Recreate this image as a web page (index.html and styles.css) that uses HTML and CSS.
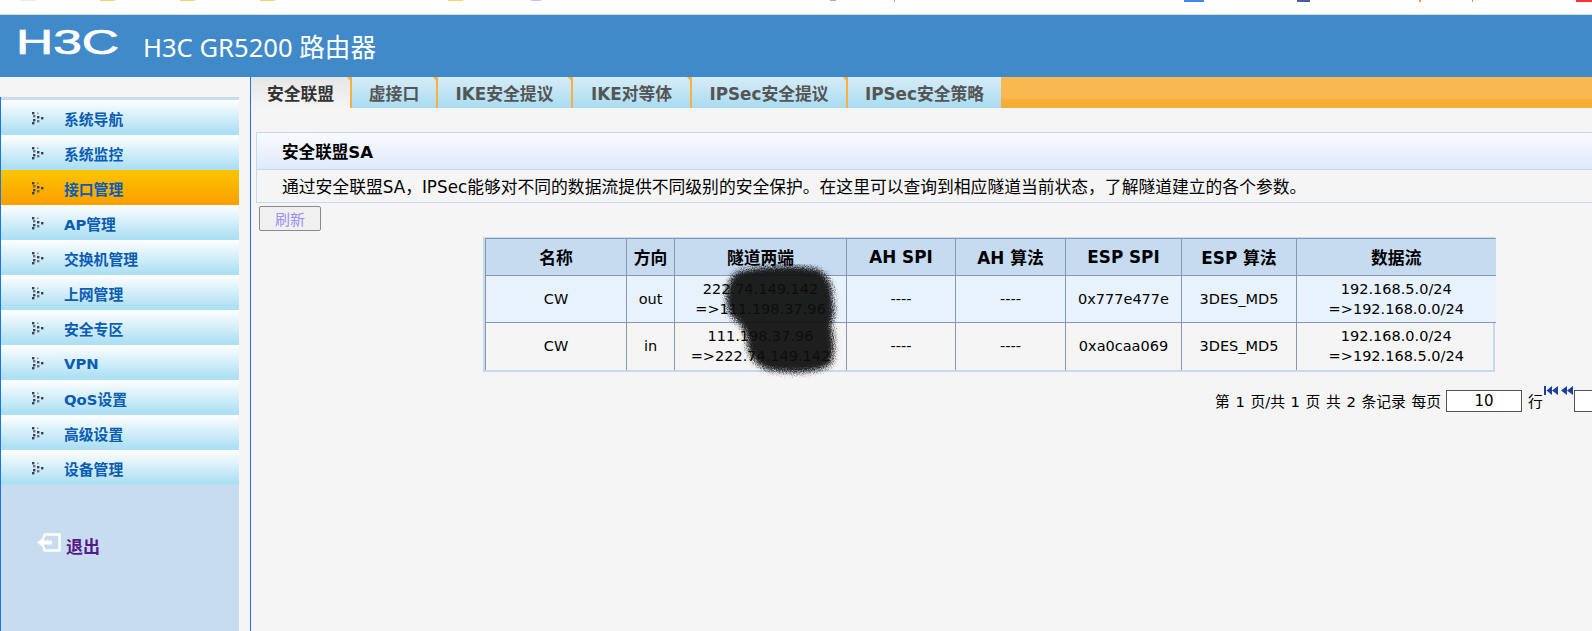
FILE: index.html
```html
<!DOCTYPE html>
<html lang="zh-CN">
<head>
<meta charset="utf-8">
<title>H3C GR5200 路由器</title>
<link rel="stylesheet" href="styles.css">
</head>
<body>
<svg class="defs" width="0" height="0" aria-hidden="true">
  <symbol id="dots" viewBox="0 0 12 13">
    <rect x="0" y="0" width="2.4" height="2.4"/><rect x="5" y="0.5" width="1.6" height="1.6" opacity=".5"/>
    <rect x="1" y="3" width="2.4" height="2.4" opacity=".7"/><rect x="5" y="4" width="2.4" height="2.4"/>
    <rect x="9" y="5" width="2.4" height="2.4"/>
    <rect x="1" y="7" width="2.4" height="2.4"/><rect x="5" y="8" width="2.4" height="2.4" opacity=".7"/>
    <rect x="0" y="10" width="2.4" height="2.4"/>
  </symbol>
</svg>
<div class="strip">
  <i class="bit b1"></i><i class="bit b2"></i><i class="bit b3"></i><i class="bit b4"></i><i class="bit b5"></i><i class="bit b6"></i><i class="bit b7"></i><i class="bit b8"></i><i class="bit b9"></i><i class="bit b10"></i><i class="bit b11"></i><i class="bit b12"></i><i class="bit b13"></i>
</div>
<header class="banner">
  <svg class="logo" width="112" height="34" viewBox="0 0 112 34"><text class="logo-text" x="1" y="29" textLength="103" lengthAdjust="spacingAndGlyphs">H3C</text></svg>
  <h1 class="title">H3C GR5200 路由器</h1>
</header>
<div class="body-row">
  <aside class="side">
    <nav class="menu">
      <a class="item"><svg class="dots"><use href="#dots"/></svg>系统导航</a>
      <a class="item"><svg class="dots"><use href="#dots"/></svg>系统监控</a>
      <a class="item active"><svg class="dots"><use href="#dots"/></svg>接口管理</a>
      <a class="item"><svg class="dots"><use href="#dots"/></svg>AP管理</a>
      <a class="item"><svg class="dots"><use href="#dots"/></svg>交换机管理</a>
      <a class="item"><svg class="dots"><use href="#dots"/></svg>上网管理</a>
      <a class="item"><svg class="dots"><use href="#dots"/></svg>安全专区</a>
      <a class="item"><svg class="dots"><use href="#dots"/></svg>VPN</a>
      <a class="item"><svg class="dots"><use href="#dots"/></svg>QoS设置</a>
      <a class="item"><svg class="dots"><use href="#dots"/></svg>高级设置</a>
      <a class="item"><svg class="dots"><use href="#dots"/></svg>设备管理</a>
      <a class="logout">
        <svg class="logout-icon" width="24" height="19" viewBox="0 0 24 19"><path d="M7 1.5H22.5V17.5H7M7 1.5V5M7 14V17.5" fill="none" stroke="#fff" stroke-width="2.4"/><path d="M0 9.5L7 4V7.6H15V11.4H7V15Z" fill="#fff"/></svg>
        <span class="logout-label">退出</span>
      </a>
    </nav>
  </aside>
  <main class="main">
    <div class="inner">
      <div class="tabs">
        <div class="tabrow">
          <div class="tab on">安全联盟</div>
          <div class="tab">虚接口</div>
          <div class="tab">IKE安全提议</div>
          <div class="tab">IKE对等体</div>
          <div class="tab">IPSec安全提议</div>
          <div class="tab last">IPSec安全策略</div>
        </div>
      </div>
      <section class="panel">
        <h2 class="panel-head">安全联盟SA</h2>
        <p class="panel-desc">通过安全联盟SA，IPSec能够对不同的数据流提供不同级别的安全保护。在这里可以查询到相应隧道当前状态，了解隧道建立的各个参数。</p>
      </section>
      <button class="refresh" type="button">刷新</button>
      <div class="table-wrap">
        <table class="sa">
          <colgroup>
            <col class="c1"><col class="c2"><col class="c3"><col class="c4"><col class="c5"><col class="c6"><col class="c7"><col class="c8">
          </colgroup>
          <thead>
            <tr><th>名称</th><th>方向</th><th>隧道两端</th><th>AH SPI</th><th>AH 算法</th><th>ESP SPI</th><th>ESP 算法</th><th>数据流</th></tr>
          </thead>
          <tbody>
            <tr class="odd"><td>CW</td><td>out</td><td>222.74.149.142<br>=&gt;111.198.37.96</td><td>----</td><td>----</td><td>0x777e477e</td><td>3DES_MD5</td><td>192.168.5.0/24<br>=&gt;192.168.0.0/24</td></tr>
            <tr><td>CW</td><td>in</td><td>111.198.37.96<br>=&gt;222.74.149.142</td><td>----</td><td>----</td><td>0xa0caa069</td><td>3DES_MD5</td><td>192.168.0.0/24<br>=&gt;192.168.5.0/24</td></tr>
          </tbody>
        </table>
        <svg class="scribble" width="130" height="120" viewBox="0 0 130 120" aria-hidden="true">
          <defs><filter id="soft" x="-20%" y="-20%" width="140%" height="140%">
            <feGaussianBlur in="SourceGraphic" stdDeviation="2.5" result="b"/>
            <feTurbulence type="fractalNoise" baseFrequency="0.9" numOctaves="2" seed="4" result="n"/>
            <feDisplacementMap in="b" in2="n" scale="9" xChannelSelector="R" yChannelSelector="G"/>
          </filter></defs>
          <path d="M18 8C40 1 84 0 100 6C111 12 114 24 114 36C116 46 115 54 112 62C116 74 116 90 112 100C100 110 70 110 50 106C36 102 30 92 28 80C28 70 24 62 12 52C4 40 6 16 18 8Z" fill="#111" fill-opacity=".93" filter="url(#soft)"/>
        </svg>
      </div>
      <div class="pager">
        <span>第 1 页/共 1 页 共 2 条记录 每页</span>
        <input class="size" type="text" value="10" aria-label="每页行数">
        <span>行</span>
        <svg class="nav-icons" width="30" height="10" viewBox="0 0 30 10" aria-hidden="true">
          <path d="M0 0H2V9H0ZM2.5 4.5L8 0V9ZM8 4.5L14 0V9Z" fill="#1a3f9e"/>
          <path d="M17 4.5L23 0V9ZM23 4.5L29 0V9Z" fill="#1a3f9e"/>
        </svg>
        <input class="jump" type="text" aria-label="跳转页">
      </div>
    </div>
  </main>
</div>
</body>
</html>
```
FILE: styles.css
```css
* { box-sizing: border-box; }
html, body { height: 100%; margin: 0; }
body {
  display: flex;
  flex-direction: column;
  overflow: hidden;
  background: #f5f5f5;
  color: #000;
  font-family: "DejaVu Sans", "Noto Sans CJK SC", sans-serif;
}
.defs { position: absolute; }

/* sliver of browser toolbar */
.strip {
  height: 15px;
  flex: none;
  display: flex;
  align-items: flex-start;
  background: #fff;
  border-bottom: 1px solid #dcdcdc;
}
.bit { display: block; height: 1px; flex: none; }
.b1 { width: 16px; margin-left: 20px; background: #e4eafc; }
.b2 { width: 15px; margin-left: 64px; background: #f8d66d; }
.b3 { width: 15px; margin-left: 65px; background: #f8d66d; }
.b4 { width: 15px; margin-left: 65px; background: #f8d66d; }
.b5 { width: 15px; margin-left: 173px; background: #f8d66d; }
.b6 { width: 10px; margin-left: 68px; background: #c2c2f4; }
.b7 { width: 6px; margin-left: 289px; background: #aaa; }
.b8 { width: 1px; margin-left: 58px; height: 2px; background: #e09a50; }
.b9 { width: 20px; margin-left: 289px; height: 2px; background: #4285f4; }
.b10 { width: 13px; margin-left: 93px; height: 2px; background: #4a5ba8; }
.b11 { width: 2px; margin-left: 109px; height: 2px; background: #f6a03c; }
.b12 { width: 1px; margin-left: 51px; height: 2px; background: #e09a50; }
.b13 { width: 17px; margin-left: 103px; height: 2px; background: #f33; }

/* banner */
.banner {
  height: 62px;
  flex: none;
  display: flex;
  align-items: center;
  padding-left: 15px;
  background: #418aca;
  color: #fff;
}
.logo { flex: none; margin-top: -9px; overflow: visible; }
.logo-text {
  font-family: "Liberation Sans", sans-serif;
  font-size: 35px;
  font-weight: 400;
  fill: #fff;
  stroke: #fff;
  stroke-width: .7;
}
.title {
  margin: 0 0 0 16px;
  font-family: "Noto Sans", "Noto Sans CJK SC", sans-serif;
  font-size: 25.6px;
  font-weight: 400;
  white-space: nowrap;
}

.body-row { flex: 1; min-height: 0; display: flex; }

/* sidebar */
.side {
  width: 251px;
  flex: none;
  display: flex;
  padding: 20px 11px 0 0;
  border-right: 1px solid #1a73f0;
}
.menu {
  flex: 1;
  padding-top: 3px;
  background: #c8dcf0;
  border-left: 1px solid #1a73f0;
}
.item {
  height: 35px;
  display: flex;
  align-items: center;
  padding: 2px 0 0 31px;
  background: linear-gradient(#fff, #aee0f4 92%);
  color: #0b5cb3;
  font-size: 14.8px;
  font-weight: 700;
  white-space: nowrap;
}
.item.active { background: linear-gradient(#fcc400, #fb9f00); }
.dots { width: 12px; height: 13px; margin-right: 20px; fill: #3a3f55; flex: none; }
.logout {
  display: flex;
  align-items: flex-start;
  margin: 48px 0 0 36px;
  color: #551a8b;
  font-size: 17px;
  font-weight: 700;
  line-height: 24px;
}
.logout-icon { margin-right: 5px; flex: none; }
.logout-label { margin-top: 2px; }

/* main */
.main { flex: 1; min-width: 0; overflow: hidden; }
.inner { width: 1476px; }
.tabs {
  height: 31px;
  background: linear-gradient(#f9b850 68%, #f7ae35 74%);
}
.tabrow {
  display: grid;
  grid-template-columns: 101px 86px 135px 119px 156px 153px;
  width: max-content;
  height: 31px;
}
.tab {
  position: relative;
  display: flex;
  align-items: center;
  justify-content: center;
  background: linear-gradient(#d6ecf6, #a9dcf1);
  border-right: 2px solid #f8b040;
  color: #555;
  font-size: 16.8px;
  font-weight: 700;
  white-space: nowrap;
}
.tab.on { background: linear-gradient(#e6e6e6, #f5f5f5); color: #333; }
.tab.last { border-right: 0; }
.tab::after {
  content: "";
  position: absolute;
  top: 0;
  right: -5px;
  border: 4px solid transparent;
  border-top: 5px solid #f8b040;
  border-bottom: 0;
}
.tab.last::after { display: none; }

.panel {
  margin: 24px 0 0 5px;
  border: 1px solid #c5daf0;
}
.panel-head {
  height: 37px;
  margin: 0;
  padding-left: 25px;
  display: flex;
  align-items: center;
  background: linear-gradient(#f8faff, #dfeafa);
  border-bottom: 1px solid #c5daf0;
  font-size: 16.6px;
  font-weight: 700;
}
.panel-desc {
  height: 32px;
  margin: 0;
  padding-left: 25px;
  display: flex;
  align-items: center;
  font-size: 16.8px;
  white-space: nowrap;
}
.refresh {
  display: block;
  width: 62px;
  height: 25px;
  margin: 3px 0 0 8px;
  padding: 0;
  background: #f0f0f0;
  border: 1px solid #8a8a8a;
  border-radius: 2px;
  color: #9d8ff5;
  font: 15px "DejaVu Sans", "Noto Sans CJK SC", sans-serif;
}

.table-wrap {
  position: relative;
  width: 1012px;
  margin: 6px 0 0 232px;
  border: 2px solid #c5daf0;
  border-top-width: 1px;
}
.sa {
  width: 1010px;
  table-layout: fixed;
  border-collapse: collapse;
  border-right: 0;
}
.c1 { width: 141px; }
.c2 { width: 48px; }
.c3 { width: 172px; }
.c4 { width: 109px; }
.c5 { width: 110px; }
.c6 { width: 116px; }
.c7 { width: 115px; }
.c8 { width: 199px; }
.sa th, .sa td {
  border: 1px solid #8699ad;
  padding: 0;
  text-align: center;
}
.sa th {
  height: 37px;
  background: #c6dbf0;
  font-size: 16.8px;
  font-weight: 700;
}
.sa td {
  height: 47px;
  font-size: 14.5px;
  line-height: 20px;
}
.sa tr:last-child td { border-bottom: 0; }
.sa th:last-child, .sa td:last-child { border-right: 0; }
.sa .odd td { background: #e8f2fd; }
.scribble {
  position: absolute;
  left: 234px;
  top: 26px;
}

.pager {
  display: flex;
  align-items: center;
  height: 22px;
  margin: 18px 0 0 964px;
  font-size: 14.8px;
  word-spacing: .9px;
  white-space: nowrap;
}
.size, .jump {
  height: 22px;
  padding: 0;
  background: #fff;
  border: 1px solid #555;
  text-align: center;
  font: 15px "DejaVu Sans", sans-serif;
  color: #000;
}
.size { width: 76px; margin: 0 6px 0 5px; }
.nav-icons { margin: -19px 0 0 1px; flex: none; }
.jump { width: 40px; }
```
